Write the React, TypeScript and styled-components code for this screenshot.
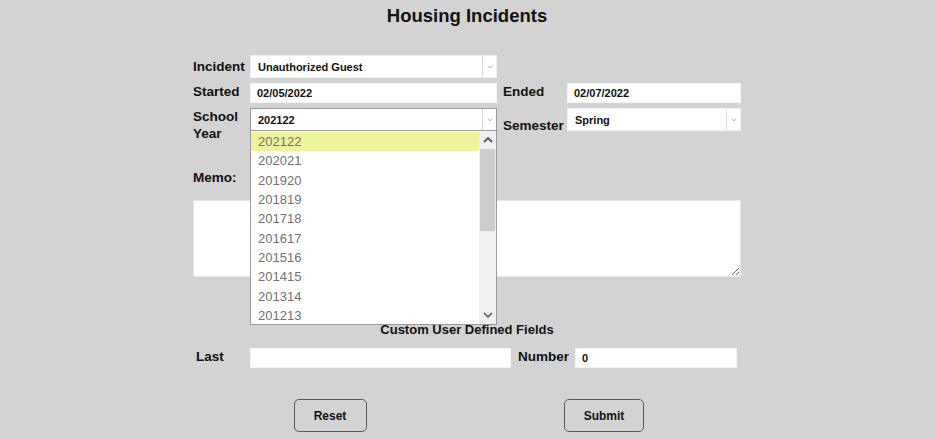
import * as React from 'react';
import styled, {createGlobalStyle} from 'styled-components';

const GlobalStyle = createGlobalStyle`
  html, body {
    margin: 0;
    padding: 0;
    background: #d3d3d3;
  }
  body {
    font-family: 'Liberation Sans', Arial, sans-serif;
    color: #111;
  }
`;

const Page = styled.div`
  width: 548px;
  margin: 0 auto;
  padding: 5px 2px 0 0;
`;

const Title = styled.h1`
  margin: 0 0 28px;
  font-size: 18.5px;
  line-height: 22px;
  font-weight: bold;
  text-align: center;
`;

const FormGrid = styled.div`
  display: grid;
  grid-template-columns: 57px 247px 70px 174px;
  row-gap: 5px;
  align-items: start;
`;

const Label = styled.label<{$center?: boolean; $indent?: number}>`
  font-size: 13.5px;
  line-height: 17px;
  font-weight: bold;
  align-self: ${p => (p.$center ? 'center' : 'start')};
  padding-left: ${p => p.$indent ?? 0}px;
  white-space: nowrap;
`;

const Input = styled.input`
  box-sizing: border-box;
  width: 100%;
  height: 20px;
  border: 1px solid #f4f4f4;
  background: #fff;
  padding: 0 6px;
  font-family: inherit;
  font-size: 11px;
  font-weight: bold;
  color: #111;
  outline: none;
`;

const SelectWrap = styled.div`
  position: relative;
`;

const SelectBox = styled.div<{$open?: boolean}>`
  box-sizing: border-box;
  height: 23px;
  display: flex;
  align-items: center;
  background: #fff;
  border: 1px solid ${p => (p.$open ? '#9a9a9a' : '#f2f2f2')};
  font-size: 11px;
  font-weight: bold;
`;

const SelectValue = styled.span`
  flex: 1;
  padding-left: 7px;
`;

const SelectArrow = styled.span`
  width: 13px;
  height: 100%;
  display: flex;
  align-items: center;
  justify-content: center;
  border-left: 1px solid #dcdcdc;
`;

const DropList = styled.div`
  position: absolute;
  top: 23px;
  left: 0;
  width: 247px;
  height: 194px;
  box-sizing: border-box;
  border: 1px solid #9a9a9a;
  border-top: none;
  background: #fff;
  display: flex;
  z-index: 5;
`;

const Options = styled.div`
  flex: 1;
  padding-top: 1px;
`;

const Option = styled.div<{$active?: boolean}>`
  height: 19.33px;
  line-height: 19px;
  padding-left: 7px;
  font-size: 13px;
  color: #727272;
  background: ${p => (p.$active ? '#eff39b' : 'transparent')};
`;

const Scrollbar = styled.div`
  width: 17px;
  background: #f0f0f0;
  display: flex;
  flex-direction: column;
`;

const ScrollBtn = styled.div`
  height: 18px;
  display: flex;
  align-items: center;
  justify-content: center;
`;

const Thumb = styled.div`
  height: 82px;
  margin: 0 1px;
  background: #cdcdcd;
`;

const Track = styled.div`
  flex: 1;
`;

const MemoLabel = styled(Label)`
  display: block;
  margin: 27px 0 14px;
`;

const Memo = styled.textarea`
  display: block;
  box-sizing: border-box;
  width: 548px;
  height: 77px;
  margin: 0;
  border: 1px solid #e6e6e6;
  background: #fff;
  resize: both;
  outline: none;
`;

const SubTitle = styled.h2`
  margin: 45px 0 10px;
  font-size: 13px;
  line-height: 16px;
  font-weight: bold;
  text-align: center;
`;

const CustomRow = styled.div`
  display: grid;
  grid-template-columns: 57px 261px 64px 162px;
  align-items: center;
`;

const Buttons = styled.div`
  display: grid;
  grid-template-columns: 1fr 1fr;
  justify-items: center;
  margin-top: 31px;
`;

const Button = styled.button<{$w: number}>`
  width: ${p => p.$w}px;
  height: 33px;
  border: 1px solid #595959;
  border-radius: 5px;
  background: #d3d3d3;
  font-family: inherit;
  font-size: 12px;
  font-weight: bold;
  color: #111;
`;

const Chevron = ({up, color, size}: {up?: boolean; color: string; size: number}) => (
  <svg width={size} height={size * 0.6} viewBox="0 0 10 6">
    <path
      d={up ? 'M1 5 L5 1 L9 5' : 'M1 1 L5 5 L9 1'}
      fill="none"
      stroke={color}
      strokeWidth={up ? 1.8 : 1.5}
    />
  </svg>
);

const Select = ({value, open}: {value: string; open?: boolean}) => (
  <SelectBox $open={open}>
    <SelectValue>{value}</SelectValue>
    <SelectArrow>
      <Chevron color="#b0b0b0" size={6} />
    </SelectArrow>
  </SelectBox>
);

const years = ['202122', '202021', '201920', '201819', '201718', '201617', '201516', '201415', '201314', '201213'];

export default function App() {
  return (
    <>
      <GlobalStyle />
      <Page>
        <Title>Housing Incidents</Title>
        <FormGrid>
          <Label $center>Incident</Label>
          <Select value="Unauthorized Guest" />
          <div />
          <div />

          <Label>Started</Label>
          <Input readOnly value="02/05/2022" />
          <Label $indent={6}>Ended</Label>
          <Input readOnly value="02/07/2022" />

          <Label>
            School
            <br />
            Year
          </Label>
          <SelectWrap>
            <Select value="202122" open />
            <DropList>
              <Options>
                {years.map((y, i) => (
                  <Option key={y} $active={i === 0}>
                    {y}
                  </Option>
                ))}
              </Options>
              <Scrollbar>
                <ScrollBtn>
                  <Chevron up color="#555" size={10} />
                </ScrollBtn>
                <Thumb />
                <Track />
                <ScrollBtn>
                  <Chevron color="#555" size={10} />
                </ScrollBtn>
              </Scrollbar>
            </DropList>
          </SelectWrap>
          <Label $center $indent={6}>Semester</Label>
          <Select value="Spring" />
        </FormGrid>

        <MemoLabel>Memo:</MemoLabel>
        <Memo />

        <SubTitle>Custom User Defined Fields</SubTitle>
        <CustomRow>
          <Label $indent={3}>Last</Label>
          <Input readOnly value="" />
          <Label $indent={7}>Number</Label>
          <Input readOnly value="0" />
        </CustomRow>

        <Buttons>
          <Button $w={73}>Reset</Button>
          <Button $w={80}>Submit</Button>
        </Buttons>
      </Page>
    </>
  );
}
